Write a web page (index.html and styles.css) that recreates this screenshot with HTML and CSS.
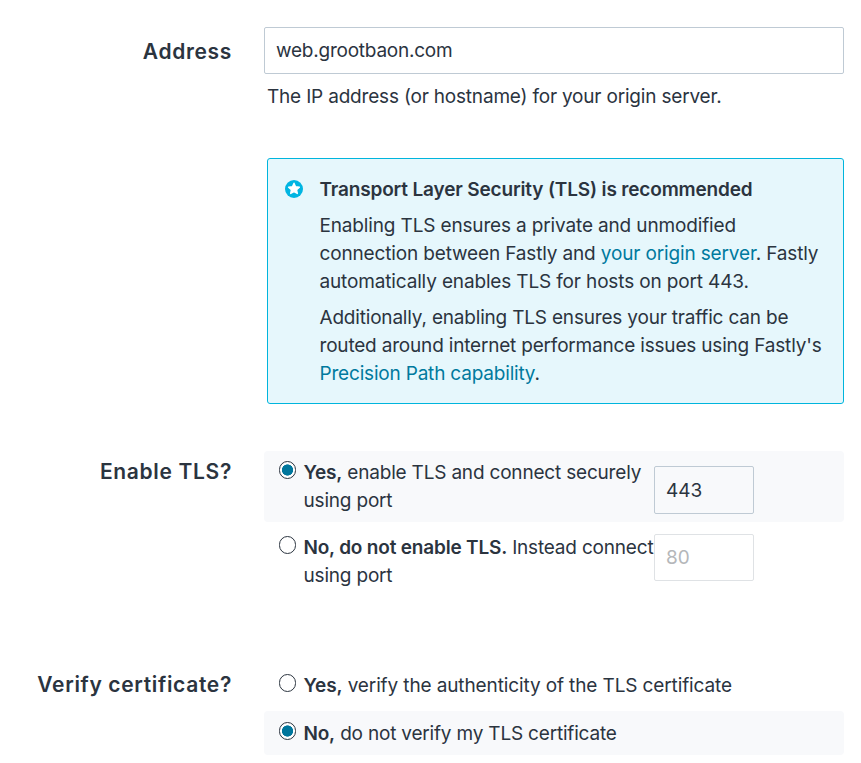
FILE: index.html
```html
<!DOCTYPE html>
<html lang="en">
<head>
<meta charset="utf-8">
<title>Host settings</title>
<link rel="stylesheet" href="styles.css">
</head>
<body>
<form class="form">
  <div class="row address">
    <div class="label">Address</div>
    <div class="field">
      <div class="input wide">web.grootbaon.com</div>
      <p class="help">The IP address (or hostname) for your origin server.</p>
      <section class="notice">
        <svg class="star" viewBox="0 0 18 18"><circle cx="9" cy="9" r="9" fill="#00b5e2"/><path d="M9 3.2l1.6 3.5 3.8.45-2.8 2.6.75 3.75L9 11.6l-3.35 1.9.75-3.75-2.8-2.6 3.8-.45z" fill="#fff" stroke="#fff" stroke-width="1.3" stroke-linejoin="round"/></svg>
        <div class="copy">
          <h2>Transport Layer Security (TLS) is recommended</h2>
          <p class="intro">Enabling TLS ensures a private and unmodified<br>connection between Fastly and <a>your origin server</a>. Fastly<br>automatically enables TLS for hosts on port 443.</p>
          <p>Additionally, enabling TLS ensures your traffic can be<br>routed around internet performance issues using Fastly's<br><a>Precision Path capability</a>.</p>
        </div>
      </section>
    </div>
  </div>
  <div class="row tls">
    <div class="label">Enable TLS?</div>
    <div class="field">
      <div class="option selected port-on">
        <span class="radio on"></span>
        <div class="text"><b>Yes,</b> enable TLS and connect securely<br>using port</div>
        <div class="input port">443</div>
      </div>
      <div class="option port-off">
        <span class="radio"></span>
        <div class="text"><b>No, do not enable TLS.</b> Instead connect<br>using port</div>
        <div class="input port muted">80</div>
      </div>
    </div>
  </div>
  <div class="row verify">
    <div class="label">Verify certificate?</div>
    <div class="field">
      <div class="option single">
        <span class="radio"></span>
        <div class="text loose"><b>Yes,</b> verify the authenticity of the TLS certificate</div>
      </div>
      <div class="option single selected">
        <span class="radio on"></span>
        <div class="text"><b>No,</b> do not verify my TLS certificate</div>
      </div>
    </div>
  </div>
</form>
</body>
</html>
```
FILE: styles.css
```css
* { box-sizing: border-box; }
body { margin: 0; background: #fff; color: #2b343f; font: 19px/28px Inter, "Liberation Sans", sans-serif; letter-spacing: -.19px; }
p, h2 { margin: 0; }
b, h2 { font-weight: 600; }
.form { padding-top: 27px; }
.row { display: grid; grid-template-columns: 232px 580px; column-gap: 32px; }
.label { font-size: 21px; font-weight: 600; letter-spacing: .67px; text-align: right; white-space: nowrap; }
.address { height: 424px; }
.address .label { padding-top: 11px; }
.input { border: 1px solid #bfcad4; border-radius: 2px; padding: 0 11px; background: #fff; }
.wide { height: 47px; line-height: 45px; letter-spacing: -.23px; }
.help { margin: 9px 0 0 3px; }
.notice { display: flex; margin: 47px 0 0 3px; height: 246px; padding: 17px 0 0 17px; border: 1px solid #00b5dd; border-radius: 3px; background: #e6f7fc; }
.star { width: 18px; height: 18px; margin: 4px 16.5px 0 0; flex: none; }
.copy { white-space: nowrap; }
.copy p { margin-top: 8px; }
.copy h2 { font-size: 19px; line-height: 28px; letter-spacing: -.16px; }
.intro { letter-spacing: -.15px; }
a { color: #007a9e; }
.tls { height: 212px; }
.tls .label { padding-top: 7px; }
.option { display: flex; padding-left: 14.5px; border-radius: 4px; }
.selected { background: #f8f9fb; }
.radio { flex: none; width: 17.5px; height: 17.5px; margin-right: 7.5px; border: 1px solid #2b343f; border-radius: 50%; background: #fff; }
.on { background: radial-gradient(circle, #00769c 0 5.3px, #fff 5.9px); }
.text { white-space: nowrap; width: 350.5px; letter-spacing: -.19px; }
.loose { letter-spacing: -.12px; }
.port-on { height: 71px; padding-top: 8px; }
.port-off { height: 71px; padding-top: 12px; }
.port-on .radio, .port-off .radio { margin-top: 2px; }
.port { width: 100px; height: 48px; line-height: 47px; margin-top: 7px; letter-spacing: 0; }
.port-on .port { background: #f8f9fb; }
.port-off .port { margin-top: 0; height: 47px; line-height: 46px; }
.input.muted { color: #b5b7ba; border-color: #dfe2e5; }
.verify .label { padding-top: 8px; }
.single { height: 44px; padding-top: 9px; }
.single + .single { margin-top: 4px; }
.single .radio { margin-top: 2px; }
```
